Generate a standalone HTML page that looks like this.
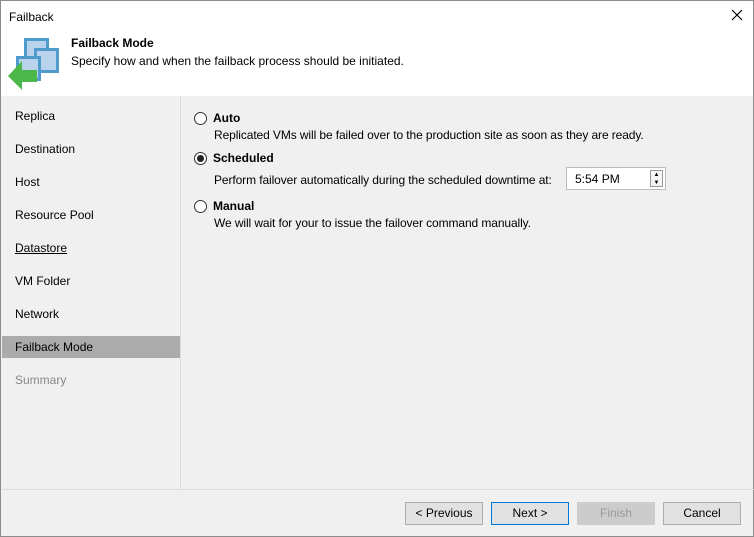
<!DOCTYPE html>
<html><head><style>
*{margin:0;padding:0;box-sizing:border-box}
body{width:754px;height:537px;background:#f0f0f0;font-family:"Liberation Sans",sans-serif;font-size:12px;color:#000;position:relative;overflow:hidden}
.win{position:absolute;left:0;top:0;width:754px;height:537px;border:1px solid #8c8c8c}
.hdr{position:absolute;left:0;top:0;width:752px;height:95px;background:#fff}
.t{position:absolute;left:8px;top:9px}
.nav{position:absolute;left:1px;top:95px;width:179px;height:393px;background:#f0f0f0;border-right:1px solid #dcdcdc;padding-top:9px}
.nav div{height:22px;line-height:22px;padding-left:13px;margin-bottom:11px}
.sel{background:#ababab}
.c{position:absolute}
.r{position:absolute;width:13px;height:13px;border:1px solid #333;border-radius:50%;background:#fff}
.btn{position:absolute;top:501px;height:23px;width:78px;border:1px solid #adadad;background:#e1e1e1;text-align:center;line-height:21px}
</style></head><body><div class="win">
<div class="hdr">
<div class="t">Failback</div>
<svg style="position:absolute;left:730px;top:8px" width="12" height="12"><path d="M1 1L11 11M11 1L1 11" stroke="#000" stroke-width="1.2"/></svg>
<svg style="position:absolute;left:0;top:30px" width="64" height="62">
<rect x="24.5" y="8.5" width="22" height="22" fill="#b9d3ec" stroke="#4f9ccc" stroke-width="3"/>
<rect x="34.5" y="18.5" width="22" height="22" fill="#b9d3ec" stroke="#4f9ccc" stroke-width="3"/>
<rect x="16.5" y="26.5" width="22" height="22" fill="#b9d3ec" stroke="#4f9ccc" stroke-width="3"/>
<path d="M7 45 L21 30 L21 39 L36 39 L36 51 L21 51 L21 59 Z" fill="#4cb84c"/>
</svg>
<div class="c" style="left:70px;top:35px;font-weight:bold">Failback Mode</div>
<div class="c" style="left:70px;top:53px">Specify how and when the failback process should be initiated.</div>
</div>
<div class="nav">
<div>Replica</div><div>Destination</div><div>Host</div><div>Resource Pool</div><div style="text-decoration:underline">Datastore</div><div>VM Folder</div><div>Network</div><div class="sel">Failback Mode</div><div style="color:#888">Summary</div>
</div>
<div class="r" style="left:193px;top:111px"></div>
<div class="c" style="left:212px;top:110px;font-weight:bold">Auto</div>
<div class="c" style="left:213px;top:127px;letter-spacing:-0.1px">Replicated VMs will be failed over to the production site as soon as they are ready.</div>
<div class="r" style="left:193px;top:151px"><div style="width:7px;height:7px;border-radius:50%;background:#222;margin:2px"></div></div>
<div class="c" style="left:212px;top:150px;font-weight:bold">Scheduled</div>
<div class="c" style="left:213px;top:172px;letter-spacing:-0.1px">Perform failover automatically during the scheduled downtime at:</div>
<div class="c" style="left:565px;top:166px;width:100px;height:23px;background:#fff;border:1px solid #bbb;padding:4px 0 0 8px">5:54 PM
<div style="position:absolute;right:2px;top:2px;width:13px;height:17px;border:1px solid #999;font-size:6px;text-align:center;line-height:8px;background:#f4f4f4">▲<br>▼</div></div>
<div class="r" style="left:193px;top:199px"></div>
<div class="c" style="left:212px;top:198px;font-weight:bold">Manual</div>
<div class="c" style="left:213px;top:215px;letter-spacing:-0.1px">We will wait for your to issue the failover command manually.</div>
<div class="c" style="left:1px;top:488px;width:752px;border-top:1px solid #dcdcdc"></div>
<div class="btn" style="left:404px">&lt; Previous</div>
<div class="btn" style="left:490px;border:1px solid #0078d7">Next &gt;</div>
<div class="btn" style="left:576px;color:#999;border-color:#ccc;background:#ccc">Finish</div>
<div class="btn" style="left:662px">Cancel</div>
</div></body></html>
